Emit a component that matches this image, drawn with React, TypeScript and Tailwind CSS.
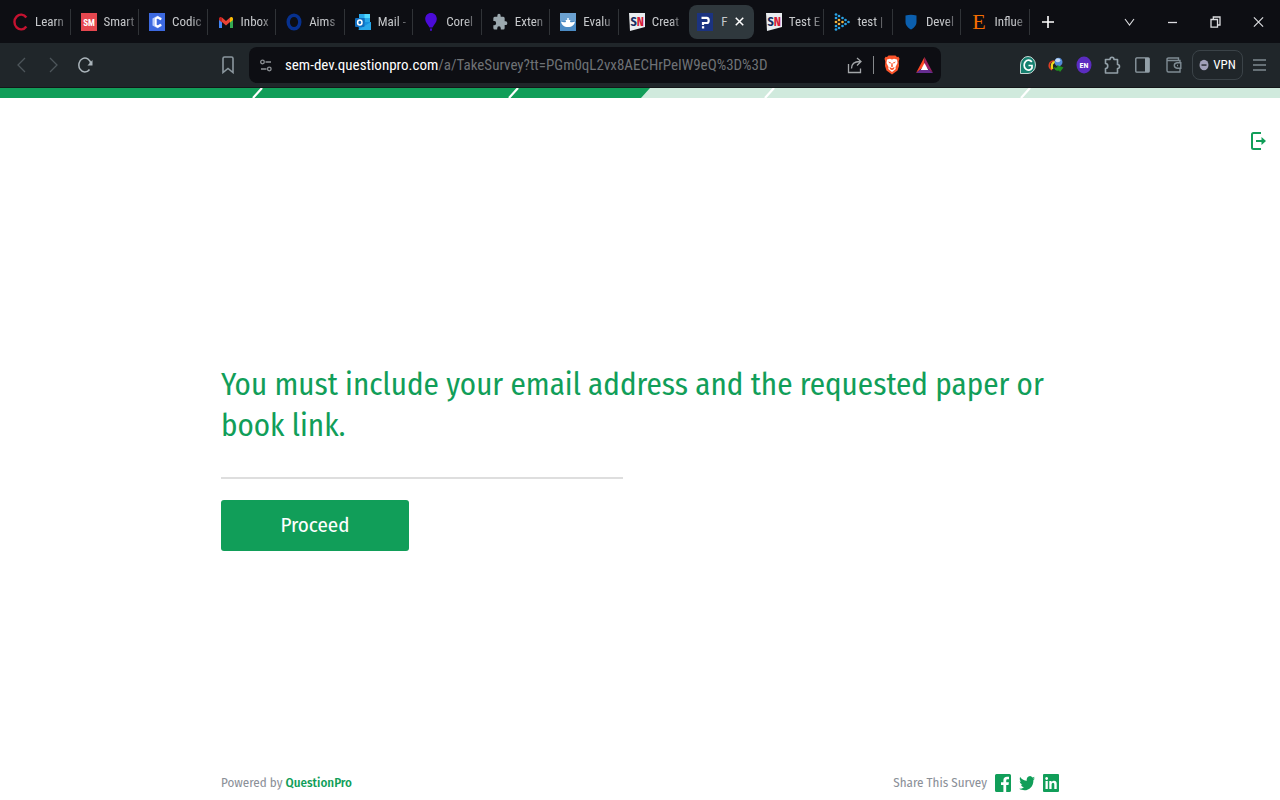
import type { ReactNode } from "react";

type IconProps = { className?: string };

const CourseraC = () => (
  <svg viewBox="0 0 16 18" className="h-[18px] w-4" fill="none">
    <path d="M14.300 4.500A6.600 7.400 0 1 0 14.300 13.500" stroke="#c51230" strokeWidth="2.400" />
  </svg>
);

const SmartIcon = () => (
  <svg viewBox="0 0 16 18" className="h-[18px] w-4">
    <rect width="16" height="18" fill="#e5474f" />
    <text x="8" y="12.500" textAnchor="middle" fontSize="9" fontWeight="700" fill="#fff">SM</text>
  </svg>
);

const CodingIcon = () => (
  <svg viewBox="0 0 16 18" className="h-[18px] w-4" fill="none">
    <rect width="16" height="18" fill="#3c69e0" />
    <path d="M12 6.200 8.500 4.200 4.800 6.200v5.600l3.700 2 3.500-2" stroke="#b9cdfb" strokeWidth="2.600" />
    <path d="M12.300 6.400 8.800 4.400 6.800 5.600v6.800L8.800 13.600l3.500-2" stroke="#fff" strokeWidth="1.800" />
  </svg>
);

const GmailIcon = () => (
  <svg viewBox="0 0 16 18" className="h-[18px] w-4">
    <path d="M1 5v10h3V8z" fill="#4285f4" />
    <path d="M15 5v10h-3V8z" fill="#34a853" />
    <path d="M4 4.500 8 8l4-3.500V9l-4 3.500L4 9z" fill="#ea4335" />
    <path d="M12 4.500c1-1.200 3-.6 3 1.200V7l-3 2.500z" fill="#fbbc04" />
    <path d="M1 5.700V7l3 2.500v-5C3 3.300 1 3.900 1 5.700z" fill="#c5221f" />
  </svg>
);

const RingIcon = () => (
  <svg viewBox="0 0 16 18" className="h-[18px] w-4" fill="none">
    <ellipse cx="8" cy="9" rx="5.800" ry="6.800" stroke="#07318f" strokeWidth="3.400" />
  </svg>
);

const OutlookIcon = () => (
  <svg viewBox="0 0 16 18" className="h-[18px] w-4" fill="none">
    <path d="M4 1h11v8H4z" fill="#28a8ea" />
    <path d="M9.500 1H15v4H9.500z" fill="#50d9ff" />
    <path d="M4 5h5.500v4H4z" fill="#0364b8" />
    <path d="M3 9h13v8H4z" fill="#1490df" />
    <path d="m3 17 13-8v8z" fill="#28a8ea" />
    <rect y="5" width="9.500" height="9" rx="1" fill="#0f6cbd" />
    <ellipse cx="4.800" cy="9.500" rx="2.200" ry="2.500" stroke="#fff" strokeWidth="1.500" />
  </svg>
);

const BalloonIcon = () => (
  <svg viewBox="0 0 16 18" className="h-[18px] w-4" fill="#4b0bd8">
    <path d="M8 0c3.400 0 5.800 2.600 5.800 6 0 3.200-2.600 5.500-4.300 8.500h-3C4.800 11.500 2.200 9.200 2.200 6c0-3.400 2.400-6 5.800-6z" />
    <path d="M6.800 15.500h2.400L8.600 18H7.400z" />
  </svg>
);

const PuzzleSolid = () => (
  <svg viewBox="0 0 24 24" preserveAspectRatio="none" className="h-[18px] w-4" fill="#9ba8ae">
    <path d="M20.500 11H19V7a2 2 0 0 0-2-2h-4V3.500a2.500 2.500 0 0 0-5 0V5H4a2 2 0 0 0-2 2v3.800h1.500a2.700 2.700 0 0 1 0 5.400H2V20a2 2 0 0 0 2 2h3.800v-1.500a2.700 2.700 0 0 1 5.400 0V22H17a2 2 0 0 0 2-2v-4h1.500a2.500 2.500 0 0 0 0-5z" />
  </svg>
);

const EvaluIcon = () => (
  <svg viewBox="0 0 16 18" className="h-[18px] w-4">
    <rect width="16" height="18" fill="#4b8bc4" />
    <rect width="16" height="8" fill="#6ba1d0" />
    <path d="M1 8.500c2 1 3.500.8 5 .5l-.4-2h4.800L10 9c1.500.3 3 .5 5-.5-.5 3.500-3 5.500-7 5.500s-6.500-2-7-5.500z" fill="#fff" />
    <path d="M7 5h2v2H7z" fill="#d9e9f7" />
  </svg>
);

const SnIcon = () => (
  <svg viewBox="0 0 16 18" className="h-[18px] w-4 font-['Fira_Sans_Condensed',sans-serif]">
    <path d="M0 0h16v14L1 18z" fill="#e9edf0" />
    <text x="1.500" y="12.500" fontSize="12" fontWeight="700" fill="#142c63">S</text>
    <text x="7.800" y="12.500" fontSize="12" fontWeight="700" fill="#d51e3b">N</text>
  </svg>
);

const QuestionProIcon = () => (
  <svg viewBox="0 0 16 18" className="h-[18px] w-4" fill="none">
    <rect width="16" height="18" fill="#1b3380" />
    <path d="M4.500 4.800h5.200q2 0 2 2.600T9.700 10H6v2" stroke="#fff" strokeWidth="2.200" />
    <path d="M4.900 13.200h2.300v2.300H4.900z" fill="#fff" />
  </svg>
);

const dotColumns = [
  { x: 2, ys: [1.5, 5, 13, 16.5], fill: "#2aa4e8" },
  { x: 2, ys: [9], fill: "#f2b33d" },
  { x: 5, ys: [3, 15], fill: "#2aa4e8" },
  { x: 5, ys: [7, 11], fill: "#f2b33d" },
  { x: 8.5, ys: [5, 13], fill: "#2aa4e8" },
  { x: 8.5, ys: [9], fill: "#f2b33d" },
  { x: 11.5, ys: [7, 11], fill: "#2aa4e8" },
  { x: 14.5, ys: [9], fill: "#2aa4e8" },
];

const DotsIcon = () => (
  <svg viewBox="0 0 16 18" className="h-[18px] w-4">
    {dotColumns.flatMap((c) => c.ys.map((y) => <circle key={`${c.x}-${y}`} cx={c.x} cy={y} r="1.350" fill={c.fill} />))}
  </svg>
);

const ShieldIcon = () => (
  <svg viewBox="0 0 16 18" className="h-[18px] w-4">
    <path d="M2.500 2.500Q8 .8 13.500 2.500V9c0 3.500-2.800 6-5.500 7.500C5.300 15 2.500 12.500 2.500 9z" fill="#0b5fae" />
  </svg>
);

const ElsevierE = () => (
  <svg viewBox="0 0 16 18" className="h-[18px] w-4 overflow-visible">
    <text x="8" y="16" textAnchor="middle" fontSize="22" fill="#f36d00" className="font-['Liberation_Serif',serif]">E</text>
  </svg>
);

type Tab = { title: string; icon: ReactNode; active?: boolean };

const tabs: Tab[] = [
  { title: "Learn", icon: <CourseraC /> },
  { title: "Smart", icon: <SmartIcon /> },
  { title: "Codic", icon: <CodingIcon /> },
  { title: "Inbox", icon: <GmailIcon /> },
  { title: "Aims", icon: <RingIcon /> },
  { title: "Mail -", icon: <OutlookIcon /> },
  { title: "Corel", icon: <BalloonIcon /> },
  { title: "Exten", icon: <PuzzleSolid /> },
  { title: "Evalu", icon: <EvaluIcon /> },
  { title: "Creat", icon: <SnIcon /> },
  { title: "F", icon: <QuestionProIcon />, active: true },
  { title: "Test E", icon: <SnIcon /> },
  { title: "test |", icon: <DotsIcon /> },
  { title: "Devel", icon: <ShieldIcon /> },
  { title: "Influe", icon: <ElsevierE /> },
];

const Close = ({ className }: IconProps) => (
  <svg viewBox="0 0 12 12" className={className} fill="none" stroke="currentColor">
    <path d="m1 1 10 10M11 1 1 11" />
  </svg>
);

function TabStrip() {
  return (
    <header className="flex h-[43px] items-center bg-[#0d0e13] pl-0.5 text-[#c6c8cb]">
      <nav aria-label="Tabs" className="grid max-w-[1028px] flex-1 grid-cols-[repeat(15,minmax(0,1fr))] items-center">
        {tabs.map((tab, i) =>
          tab.active ? (
            <div key={i} className="mx-0.5 flex h-[34px] items-center rounded-lg bg-[#2f383d] pl-2">
              {tab.icon}
              <a href="#survey" className="w-5 pl-2 text-[13px]">{tab.title}</a>
              <button type="button" aria-label="Close tab" className="ml-0.5 text-white">
                <Close className="size-[9px] stroke-2" />
              </button>
            </div>
          ) : (
            <div
              key={i}
              className={`flex h-[26px] items-center border-r pl-[10px] ${
                tabs[i + 1]?.active ? "border-transparent" : "border-[#303337]"
              }`}
            >
              <span className="shrink-0">{tab.icon}</span>
              <a
                href="#tab"
                className="ml-[7px] mask-r-from-70% mask-r-to-120% text-[13px] whitespace-nowrap"
              >
                {tab.title}
              </a>
            </div>
          ),
        )}
      </nav>
      <button type="button" aria-label="New tab" className="ml-3 text-white">
        <svg viewBox="0 0 12 12" className="size-3" fill="none" stroke="currentColor" strokeWidth="1.600">
          <path d="M6 0v12M0 6h12" />
        </svg>
      </button>
      <div className="ml-auto flex items-center gap-8 pr-4 text-[#dcdde0]">
        <button type="button" aria-label="Search tabs">
          <svg viewBox="0 0 11 8" className="h-2 w-[11px]" fill="none" stroke="currentColor" strokeWidth="1.100">
            <path d="m1 1 4.500 6L10 1" />
          </svg>
        </button>
        <button type="button" aria-label="Minimize">
          <svg viewBox="0 0 11 11" className="size-[11px]" stroke="currentColor" strokeWidth="1.300">
            <path d="M1 6.500h9" />
          </svg>
        </button>
        <button type="button" aria-label="Restore">
          <svg viewBox="0 0 11 12" className="h-3 w-[11px]" fill="none" stroke="currentColor" strokeWidth="1.300">
            <path d="M1 3.500h6.500v7.700H1zM3.300 3V1H10v8H8" />
          </svg>
        </button>
        <button type="button" aria-label="Close window">
          <Close className="h-3 w-[11px] stroke-[1.300]" />
        </button>
      </div>
    </header>
  );
}

function AddressBar() {
  return (
    <div className="flex h-9 min-w-0 flex-1 items-center rounded-lg bg-[#0d0e13] pr-2 pl-[11px]">
      <button type="button" aria-label="Site settings" className="text-[#8d9195]">
        <svg viewBox="0 0 12 13" className="h-[13px] w-3" fill="none" stroke="currentColor" strokeWidth="1.300">
          <circle cx="2.500" cy="3" r="1.800" />
          <circle cx="9.300" cy="10" r="1.800" />
          <path d="M5.500 3h5.500M1 10h5.500" />
        </svg>
      </button>
      <a href="#survey" aria-label="Address" className="ml-[13px] flex-1 text-[15px] whitespace-nowrap text-[#6f7276]">
        <span className="text-white">sem-dev.questionpro.com</span>/a/TakeSurvey?tt=PGm0qL2vx8AECHrPeIW9eQ%3D%3D
      </a>
      <button type="button" aria-label="Share" className="text-[#a3a6a9]">
        <svg viewBox="0 0 16 18" className="h-[18px] w-4" fill="none" stroke="currentColor" strokeWidth="1.300">
          <path d="M1.500 8v8.500h12v-4M4.500 12.500C4.500 8 7 5.500 13 5.500M10 2l4 3.500L10 9.500" />
        </svg>
      </button>
      <span className="mx-[10px] h-[18px] w-px bg-[#85888b]" />
      <button type="button" aria-label="Shields">
        <svg viewBox="0 0 16 20" className="h-5 w-4">
          <path d="M4.500.5h7L13 2l1.500-.2 1 2-.8 2.700.3 4.500-1.500 4.500L8 19.500l-5.500-4L1 11l.3-4.500L.5 3.800l1-2L3 2z" fill="#fb542b" />
          <path d="m3 4.500 3-.8 2 .8 2-.8 3 .8.500 3.500-2 4 .2 2L8 17l-3.700-3 .2-2-2-4z" fill="#fff" />
          <path d="m4 6.500 3 1-.8 1.200zM12 6.500l-3 1 .8 1.200zM7.500 8h1l.4 3.500L8 12.300l-.9-.8zM5.500 12 8 13.200l2.500-1.200-.5 2-2 1.300L6 14z" fill="#fb542b" />
        </svg>
      </button>
      <button type="button" aria-label="Rewards" className="ml-4">
        <svg viewBox="0 0 17 18" className="h-[18px] w-[17px]">
          <path d="M8.500 1 0 17l8.500-7z" fill="#ff4724" />
          <path d="M8.500 1 17 17 8.500 10z" fill="#9e1f63" />
          <path d="M0 17h17l-5-4H5z" fill="#662d91" />
          <path d="m8.500 7 3.700 7H4.800z" fill="#fff" />
        </svg>
      </button>
    </div>
  );
}

function Extensions() {
  return (
    <div className="flex items-center text-[#93a0a8]">
      <button type="button" aria-label="Grammarly">
        <svg viewBox="0 0 16 18" className="h-[18px] w-4" fill="none">
          <path d="M.5 17.500V9A7.500 8.500 0 1 1 8 17.500z" fill="#168070" stroke="#c6d5d2" />
          <path d="M11.800 6A4.300 5 0 1 0 12 12V9.500H8.500" stroke="#fff" strokeWidth="1.700" />
        </svg>
      </button>
      <button type="button" aria-label="Download manager" className="ml-3">
        <svg viewBox="0 0 16 18" className="h-[18px] w-4" fill="none">
          <path d="M6.500 5C3.500 5 1.500 7 1.200 9S2 12.500 4 14" stroke="#dc3e25" strokeWidth="1.500" />
          <path d="M7.500 6C4 6.500 3 9 4.500 13" stroke="#f2d71c" strokeWidth="2.400" />
          <path d="M7 7.500C5.500 8.500 5.500 11 6.500 12.500" stroke="#1d2417" strokeWidth="1.400" />
          <ellipse cx="10.500" cy="6" rx="4" ry="4.300" fill="#5289d8" />
          <ellipse cx="9.800" cy="4.200" rx="2.500" ry="2" fill="#c6dcf5" />
          <path d="M5.500 10.500c1.500 1.500 2.500 1.500 4 .5l-.5-2 6.500 2.500-3.500 4.500-1-1.500C8.500 15.500 6.500 14 5.500 10.500z" fill="#21911f" />
        </svg>
      </button>
      <button type="button" aria-label="Language" className="ml-3">
        <svg viewBox="0 0 16 18" className="h-[18px] w-4">
          <ellipse cx="8" cy="9" rx="7.500" ry="8.500" fill="#5b2cc0" />
          <text x="8" y="12" textAnchor="middle" fontSize="8" fontWeight="700" fill="#fff">EN</text>
        </svg>
      </button>
      <button type="button" aria-label="Extensions" className="ml-3">
        <svg viewBox="0 0 17 19" className="h-[19px] w-[17px]" fill="none" stroke="currentColor" strokeWidth="1.600">
          <path d="M1.500 3.500H6a2 2.300 0 0 1 4 0h3.500v5a2 2 0 0 1 0 4V17h-12v-4.500c3 0 3-5 0-5z" strokeLinejoin="round" />
        </svg>
      </button>
      <button type="button" aria-label="Side panel" className="ml-[14px]">
        <svg viewBox="0 0 15 16" className="h-4 w-[15px]" fill="none" stroke="currentColor" strokeWidth="1.300">
          <rect x=".8" y=".8" width="13.400" height="14.400" rx="1" />
          <path d="M10 1h4v14h-4z" fill="currentColor" stroke="none" />
        </svg>
      </button>
      <button type="button" aria-label="Wallet" className="ml-4 text-[#7f8c94]">
        <svg viewBox="0 0 16 16" className="size-4" fill="none" stroke="currentColor" strokeWidth="1.400">
          <path d="M14 5V3.500H2.500Q1 3.500 1 2.200 1 1 2.500 1H12.500v2M1 2v11.500Q1 15 2.500 15H14v-3M14.800 5.800v5.400H11q-2.700-.4-2.700-2.700T11 5.800zM11 8.500h1" />
        </svg>
      </button>
      <button
        type="button"
        className="ml-[10px] flex h-[30px] w-[51px] items-center justify-center gap-1 rounded-lg border border-[#3b4348] text-[13px] text-white"
      >
        <svg viewBox="0 0 10 12" className="h-3 w-[10px] shrink-0">
          <ellipse cx="5" cy="6" rx="4.500" ry="5.300" fill="#a19fb9" />
          <path d="M2.500 5.300h5v1.500h-5z" fill="#2d3038" />
        </svg>
        VPN
      </button>
      <button type="button" aria-label="Menu" className="ml-[10px] text-[#7d8990]">
        <svg viewBox="0 0 13 12" className="h-3 w-[13px]" stroke="currentColor" strokeWidth="1.300">
          <path d="M0 1h13M0 6h13M0 11h13" />
        </svg>
      </button>
    </div>
  );
}

function Toolbar() {
  return (
    <div className="flex h-[45px] items-center border-b border-[#141719] bg-[#20262a] pr-[14px] pl-[17px] text-[#4d555a]">
      <button type="button" aria-label="Back">
        <svg viewBox="0 0 9 16" className="h-4 w-[9px]" fill="none" stroke="currentColor" strokeWidth="1.300">
          <path d="M8 1 1 8l7 7" />
        </svg>
      </button>
      <button type="button" aria-label="Forward" className="ml-[23px]">
        <svg viewBox="0 0 9 16" className="h-4 w-[9px]" fill="none" stroke="currentColor" strokeWidth="1.300">
          <path d="m1 1 7 7-7 7" />
        </svg>
      </button>
      <button type="button" aria-label="Reload" className="ml-5 text-[#aab4ba]">
        <svg viewBox="0 0 15 16" className="h-4 w-[15px]" fill="none" stroke="currentColor" strokeWidth="1.500">
          <path d="M11.500 12.500A6 7 0 1 1 12.800 7" />
          <path d="M14.500 3v5.500H9.500z" fill="currentColor" stroke="none" />
        </svg>
      </button>
      <button type="button" aria-label="Bookmark" className="ml-[129px] text-[#8b979e]">
        <svg viewBox="0 0 12 18" className="h-[18px] w-3" fill="none" stroke="currentColor" strokeWidth="1.600">
          <path d="M1 2.500Q1 1 2.500 1h7Q11 1 11 2.500v14L6 12.500l-5 4z" />
        </svg>
      </button>
      <div className="mr-[79px] ml-[15px] flex min-w-0 flex-1">
        <AddressBar />
      </div>
      <Extensions />
    </div>
  );
}

const ProgressBar = () => (
  <svg
    role="progressbar"
    aria-label="Survey progress"
    aria-valuenow={50}
    viewBox="0 0 1280 10"
    preserveAspectRatio="none"
    className="h-[10px] w-full bg-[#d0eadd]"
  >
    <path d="M0 0h650l-9 10H0z" fill="#119e59" />
    <path d="m262 0-9 10M518 0l-9 10M774 0l-9 10M1030 0l-9 10" stroke="#fff" strokeWidth="2.200" />
  </svg>
);

const socials = [
  {
    name: "Facebook",
    path: "M1.500 0h13Q16 0 16 1.500v15q0 1.500-1.500 1.500h-3.300v-7h2.300l.4-2.800h-2.700V6.500q0-1.200 1.200-1.200H14V2.800h-2q-3.600 0-3.600 3.500v1.900H6V11h2.400v7H1.500Q0 18 0 16.500v-15Q0 0 1.500 0z",
  },
  {
    name: "Twitter",
    path: "M16 4.200q-.8.500-1.700.6Q15.200 4 15.600 2.800q-1 .6-2.100.8A3.200 3.500 0 0 0 7.900 6.800Q3.900 6.600 1.200 2.900C.3 4.500.8 6.500 2.200 7.600q-.8 0-1.500-.4.100 2.700 2.600 3.500-.7.200-1.400.1.700 2.200 3 2.400-2 1.800-4.800 1.600C7.500 18.800 14.600 14 14.400 6.100Q15.400 5.300 16 4.200z",
  },
  {
    name: "LinkedIn",
    path: "M1 0h14q1 0 1 1v16q0 1-1 1H1q-1 0-1-1V1Q0 0 1 0zM2.500 7v8h2.300V7zM3.600 3a1.400 1.500 0 1 0 .1 0zM6.300 7v8h2.300v-4.500q0-1.700 1.400-1.700t1.300 1.700V15h2.400v-5q0-3.200-2.700-3.200-1.600 0-2.400 1.400V7z",
  },
];

export default function App() {
  return (
    <div className="flex min-h-screen flex-col bg-white font-['Fira_Sans_Condensed','Lato',sans-serif] leading-normal">
      <div className="font-['Noto_Sans_Condensed','Roboto_Condensed','Fira_Sans_Condensed','Lato',sans-serif]">
        <TabStrip />
        <Toolbar />
      </div>
      <ProgressBar />
      <div className="flex justify-end pt-[34px] pr-[14px]">
        <a href="#exit" aria-label="Exit survey" className="text-[#119e59]">
          <svg viewBox="0 0 16 18" className="h-[18px] w-4" fill="none" stroke="currentColor" strokeWidth="2">
            <path d="M11 1H3.500Q2 1 2 2.500v13Q2 17 3.500 17H11M6 9h7" />
            <path d="m11.500 5 4.500 4-4.500 4z" fill="currentColor" stroke="none" />
          </svg>
        </a>
      </div>
      <div className="mx-auto flex w-full max-w-[838px] flex-1 flex-col">
        <main id="survey" className="pt-[214px]">
          <form onSubmit={(e) => e.preventDefault()}>
            <label htmlFor="answer" className="block text-[31px] leading-[41px] text-[#119e59]">
              You must include your email address and the requested paper or book link.
            </label>
            <input
              id="answer"
              type="text"
              className="block h-[33px] w-full max-w-[402px] border-b-2 border-[#dedede] text-xl outline-none"
            />
            <button
              type="submit"
              className="mt-[21px] h-[51px] w-[188px] rounded-[3px] bg-[#119e59] text-[21px] text-white"
            >
              Proceed
            </button>
          </form>
        </main>
        <footer className="mt-auto flex items-center justify-between pb-[7px] text-[13px] leading-5 text-[#8b9098]">
          <p>
            Powered by{" "}
            <a href="#questionpro" className="font-medium text-[#119e59]">QuestionPro</a>
          </p>
          <div className="flex items-center gap-2">
            <span>Share This Survey</span>
            {socials.map((s) => (
              <a key={s.name} href={`#${s.name}`} aria-label={s.name} className="text-[#119e59]">
                <svg viewBox="0 0 16 18" className="h-[18px] w-4" fill="currentColor" fillRule="evenodd">
                  <path d={s.path} />
                </svg>
              </a>
            ))}
          </div>
        </footer>
      </div>
    </div>
  );
}
